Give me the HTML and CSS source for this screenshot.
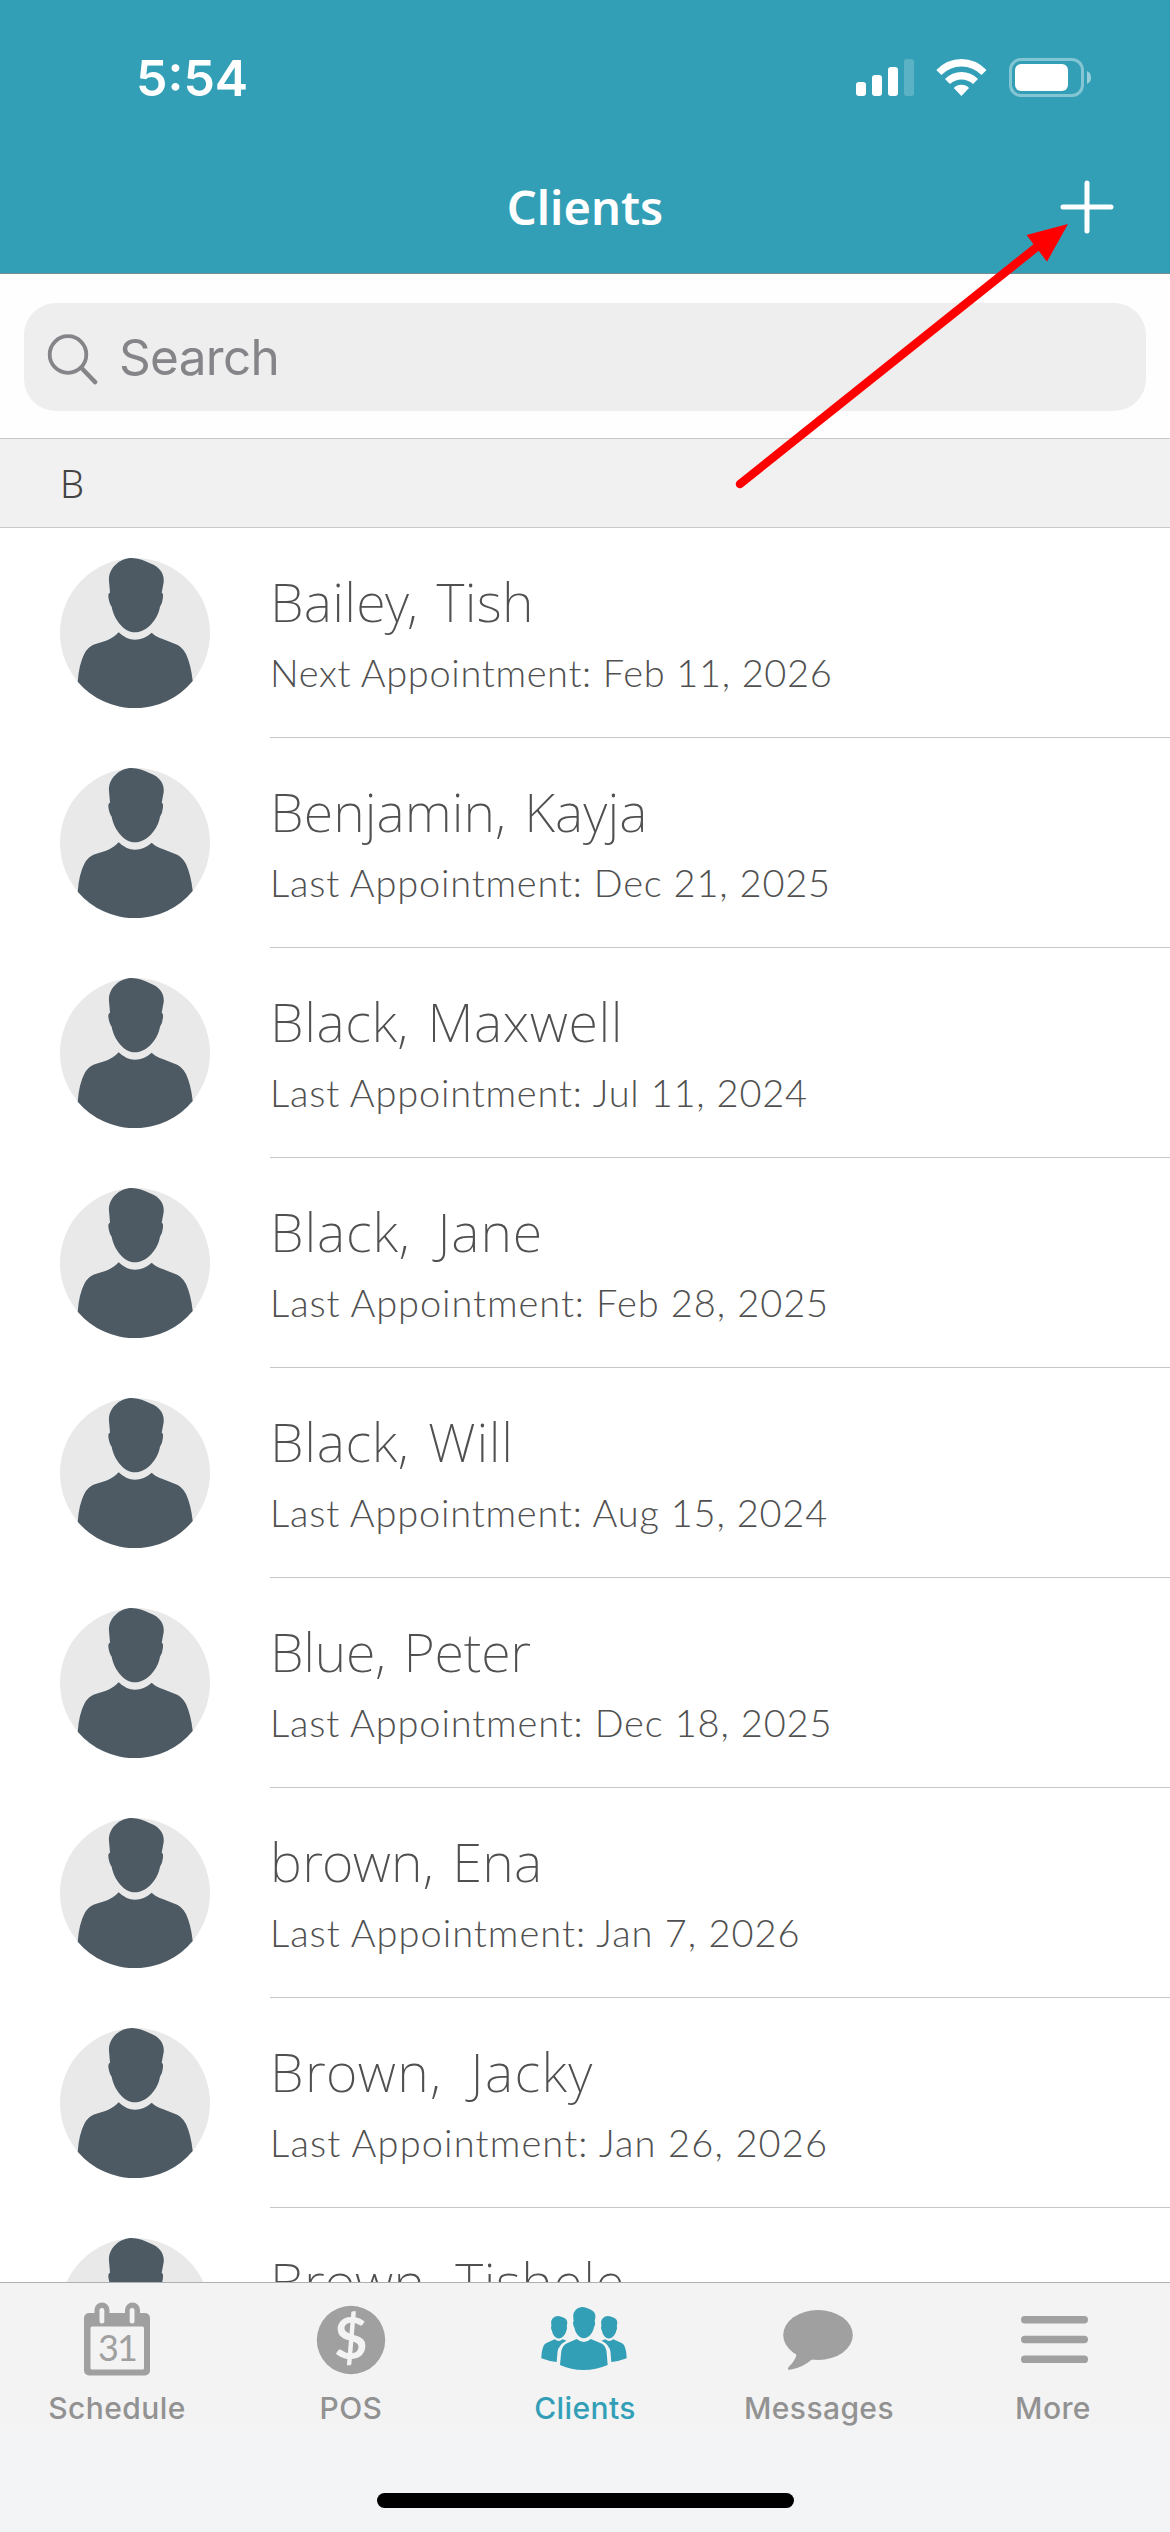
FILE: index.html
```html
<!DOCTYPE html>
<html lang="en">
<head>
<meta charset="utf-8">
<title>Clients</title>
<link rel="stylesheet" href="styles.css">
</head>
<body>
<svg class="defs" aria-hidden="true">
  <symbol id="head" viewBox="0 0 150 150" overflow="visible">
    <path d="M71.7 0C78 0 84 2.500 90 5.300C100 9 104.500 16 103.700 24L101.700 34.700Q103.500 35 102.900 40Q102.500 45 100 48.700C98 61 87 74.300 75 74.300C63 74.300 53.500 60 51.700 48.700Q49.500 46 48.500 40Q47.800 35 50 34.700L49 23C48 10 60 0 71.700 0Z"/>
  </symbol>
  <symbol id="avatar" viewBox="0 0 150 150">
    <circle cx="75" cy="75" r="75" fill="#e9e9e9"/>
    <use href="#head" width="150" height="150" fill="#4d5a63"/>
    <path fill="#4d5a63" d="M58.700 74.300Q66 81.700 75 81.700Q84 81.700 91.700 74.700Q96 79 103.300 81.300L114 85.500Q122 88 126 96Q131 107 132.700 123A75 75 0 0 1 17.700 123.700Q19 106 24.500 95.500Q28 89 34 86.500L46 82.700Q54 79.500 58.700 74.300Z"/>
  </symbol>
</svg>

<div class="screen">
  <header class="top">
    <div class="status">
      <span class="time">5:54</span>
      <svg class="status-icons" width="240" height="40" viewBox="854 58 240 40" fill="#fff">
        <rect x="856" y="82" width="10" height="14" rx="3"/>
        <rect x="872" y="75" width="10" height="21" rx="3"/>
        <rect x="888" y="67" width="10" height="29" rx="3"/>
        <rect x="904" y="59" width="10" height="37" rx="3" opacity=".2"/>
        <path d="M936.300 70Q947 59 961.400 59Q976 59 986.500 70L981.500 75Q973 66.500 961.400 66.500Q950 66.500 941.300 75Z"/>
        <path d="M945 79Q952 72 961.400 72Q971 72 978 79L973 84Q968 79.500 961.400 79.500Q955 79.500 950 84Z"/>
        <path d="M953.800 88Q957 84.700 961.400 84.700Q966 84.700 969 88L961.400 96Z"/>
        <rect x="1010.500" y="59.500" width="72" height="36" rx="10.500" fill="none" stroke="#fff" stroke-width="3" opacity=".4"/>
        <rect x="1015" y="64" width="53" height="27" rx="6"/>
        <path d="M1087 71Q1091 73 1091 77.500Q1091 82 1087 84Z" opacity=".5"/>
      </svg>
    </div>
    <div class="nav">
      <h1 class="title">Clients</h1>
      <svg class="plus" width="54" height="54" viewBox="0 0 54 54" stroke="#fff" stroke-width="5" stroke-linecap="round">
        <path d="M27 3V51M3 27H51"/>
      </svg>
    </div>
  </header>

  <div class="search-area">
    <div class="search">
      <svg width="56" height="56" viewBox="44 326 56 56" fill="none" stroke="#858589" stroke-width="3.800" stroke-linecap="round">
        <circle cx="68" cy="351.500" r="18.300"/>
        <path d="M81.500 365L95 379" stroke-width="4.600"/>
      </svg>
      <span class="placeholder">Search</span>
    </div>
  </div>

  <div class="section">B</div>

  <ul class="list">
    <li><svg class="avatar"><use href="#avatar"/></svg><div class="info"><div class="name">Bailey, Tish</div><div class="sub">Next Appointment: Feb 11, 2026</div></div></li>
    <li><svg class="avatar"><use href="#avatar"/></svg><div class="info"><div class="name">Benjamin, Kayja</div><div class="sub">Last Appointment: Dec 21, 2025</div></div></li>
    <li><svg class="avatar"><use href="#avatar"/></svg><div class="info"><div class="name">Black, Maxwell</div><div class="sub">Last Appointment: Jul 11, 2024</div></div></li>
    <li><svg class="avatar"><use href="#avatar"/></svg><div class="info"><div class="name">Black, Jane</div><div class="sub">Last Appointment: Feb 28, 2025</div></div></li>
    <li><svg class="avatar"><use href="#avatar"/></svg><div class="info"><div class="name">Black, Will</div><div class="sub">Last Appointment: Aug 15, 2024</div></div></li>
    <li><svg class="avatar"><use href="#avatar"/></svg><div class="info"><div class="name">Blue, Peter</div><div class="sub">Last Appointment: Dec 18, 2025</div></div></li>
    <li><svg class="avatar"><use href="#avatar"/></svg><div class="info"><div class="name">brown, Ena</div><div class="sub">Last Appointment: Jan 7, 2026</div></div></li>
    <li><svg class="avatar"><use href="#avatar"/></svg><div class="info"><div class="name">Brown, Jacky</div><div class="sub">Last Appointment: Jan 26, 2026</div></div></li>
    <li><svg class="avatar"><use href="#avatar"/></svg><div class="info"><div class="name">Brown, Tishele</div></div></li>
  </ul>

  <nav class="tabs">
    <div class="tab">
      <svg class="tab-icon" viewBox="0 0 130 100">
        <path d="M37 23H42.500V20A7.500 7.500 0 0 1 57.500 20V23H73V20A7.500 7.500 0 0 1 88 20V23H93A5 5 0 0 1 98 28V80.500A5 5 0 0 1 93 85.500H37A5 5 0 0 1 32 80.500V28A5 5 0 0 1 37 23Z"/>
        <g fill="#f3f3f3"><rect x="38.500" y="36.500" width="53.500" height="43" rx="1.500"/><rect x="47.500" y="18" width="4.800" height="15.500" rx="2.200"/><rect x="77.700" y="18" width="4.800" height="15.500" rx="2.200"/></g>
        <text class="day" x="65" y="71" text-anchor="middle">31</text>
      </svg>
      <span>Schedule</span>
    </div>
    <div class="tab">
      <svg class="tab-icon" viewBox="0 0 130 100"><circle cx="65" cy="50" r="34.200"/><text class="dollar" x="65" y="69" text-anchor="middle">$</text></svg>
      <span>POS</span>
    </div>
    <div class="tab active">
      <svg class="tab-icon" viewBox="0 0 130 100">
        <use href="#head" width="150" height="150" transform="translate(33.400 17) scale(.405 .42)"/>
        <use href="#head" width="150" height="150" transform="translate(16.700 26) scale(.295 .302)"/>
        <use href="#head" width="150" height="150" transform="translate(66.700 26) scale(.295 .302)"/>
        <path d="M56.700 49Q64 55 70.700 49L81 53.300Q85.500 55.500 86.500 61L87.700 75Q76 80 63.500 80Q51 80 40 75L41.300 61Q42.500 55.500 47 53.300Z"/>
        <path id="side" d="M34.700 49.300Q39 52.500 42.700 49.300L46.500 50.700Q38.500 54.500 37.500 62L36.700 72Q28 71 21.300 68.300Q21.500 60 24 55Q25 53.500 27 52.700Z"/>
        <use href="#side" transform="matrix(-1 0 0 1 128 0)"/>
      </svg>
      <span>Clients</span>
    </div>
    <div class="tab">
      <svg class="tab-icon" viewBox="0 0 130 100"><ellipse cx="64" cy="45" rx="34.800" ry="25"/><path d="M42.500 62Q43 69 35 76.500Q32 80.500 37 79.500Q48 78 58.500 69Z"/></svg>
      <span>Messages</span>
    </div>
    <div class="tab">
      <svg class="tab-icon" viewBox="0 0 130 100"><rect x="33" y="26" width="67" height="7.500" rx="3.700"/><rect x="33" y="45.800" width="67" height="7.500" rx="3.700"/><rect x="33" y="65.600" width="67" height="7.500" rx="3.700"/></svg>
      <span>More</span>
    </div>
  </nav>
  <div class="home"><div class="home-bar"></div></div>

  <svg class="arrow" viewBox="0 0 340 280">
    <path d="M10 264L308 26" stroke="#f00" stroke-width="8.500" stroke-linecap="round"/>
    <path d="M338 4L296.500 15L317 41.700Z" fill="#f00"/>
  </svg>
</div>
</body>
</html>
```
FILE: styles.css
```css
* { box-sizing: border-box; }
body { margin: 0; background: #fff; font-family: Inter, "Liberation Sans", sans-serif; }
.defs { position: absolute; width: 0; height: 0; }
.screen { position: relative; display: flex; flex-direction: column; width: 1170px; height: 2532px; overflow: hidden; }

.top { height: 274px; background: #329fb7; border-bottom: 1px solid #7c8b8f; color: #fff; }
.status { display: flex; justify-content: space-between; align-items: center; height: 156px; padding: 0 76px 0 136px; }
.time { font-size: 50px; font-weight: 600; line-height: 60px; }
.nav { display: grid; grid-template-columns: 1fr auto 1fr; align-items: center; height: 102px; padding-right: 56px; padding-left: 56px; }
.title { grid-column: 2; margin: 0; font: 600 47px/60px "Noto Sans", sans-serif; }
.plus { justify-self: end; }

.search-area { height: 165px; padding: 29px 24px 27px; background: #fefefe; border-bottom: 1px solid #c8c8c8; }
.search { display: flex; align-items: center; height: 108px; padding-left: 20px; background: #eee; border-radius: 32px; }
.placeholder { margin-left: 19px; font-size: 49.5px; line-height: 60px; letter-spacing: -.7px; color: #858589; }

.section { height: 89px; padding: 0 0 0 60px; background: #f1f1f1; border-bottom: 1px solid #c8c8c8; color: #444; font: 300 38px/88px "Noto Sans", sans-serif; }

.list { flex: 1; min-height: 0; overflow: hidden; margin: 0; padding: 0; list-style: none; color: #505050; }
.list li { --name-track: .3px; --name-gap: 4px; --sub-track: .8px; display: flex; height: 210px; padding-left: 60px; }
.avatar { flex: none; width: 150px; height: 150px; margin: 30px 60px 0 0; }
.info { flex: 1; padding-top: 38px; border-bottom: 1px solid #c8c8c8; white-space: nowrap; }
.name { font: 200 54px/70px "Noto Sans", sans-serif; letter-spacing: var(--name-track); word-spacing: var(--name-gap); }
.sub { margin-top: 11px; font: 300 38px/50px Lato, sans-serif; letter-spacing: var(--sub-track); }
.list li:nth-child(1) { --sub-track: .65px; }
.list li:nth-child(2) { --name-track: .1px; }
.list li:nth-child(3) { --name-track: .6px; }
.list li:nth-child(4) { --name-track: .9px; --name-gap: 12px; --sub-track: .93px; }
.list li:nth-child(5) { --name-track: .7px; }
.list li:nth-child(6) { --name-track: -.25px; --sub-track: .85px; }
.list li:nth-child(7) { --sub-track: 1px; }
.list li:nth-child(8) { --name-track: 1.4px; --name-gap: 13px; --sub-track: 1.15px; }
.list li:nth-child(9) { --name-track: .5px; }

.tabs { display: grid; grid-template-columns: repeat(5, 1fr); height: 148px; background: #f3f3f3; border-top: 1px solid #b0b0b0; color: #929292; fill: #a0a0a0; }
.tab { display: flex; flex-direction: column; align-items: center; padding-top: 7px; font-size: 30px; font-weight: 500; line-height: 36px; letter-spacing: .4px; }
.tab-icon { width: 130px; height: 100px; }
.active { color: #329fb7; fill: #329fb7; }
.day { font: 400 36px Lato, sans-serif; letter-spacing: -2px; }
.dollar { font: 700 58px Lato, sans-serif; fill: #f3f3f3; }
.home { display: flex; justify-content: center; height: 102px; padding-top: 63px; background: #f3f4f6; }
.home-bar { width: 417px; height: 15px; background: #000; border-radius: 8px; }

.arrow { position: absolute; left: 730px; top: 220px; width: 340px; height: 280px; }
```
